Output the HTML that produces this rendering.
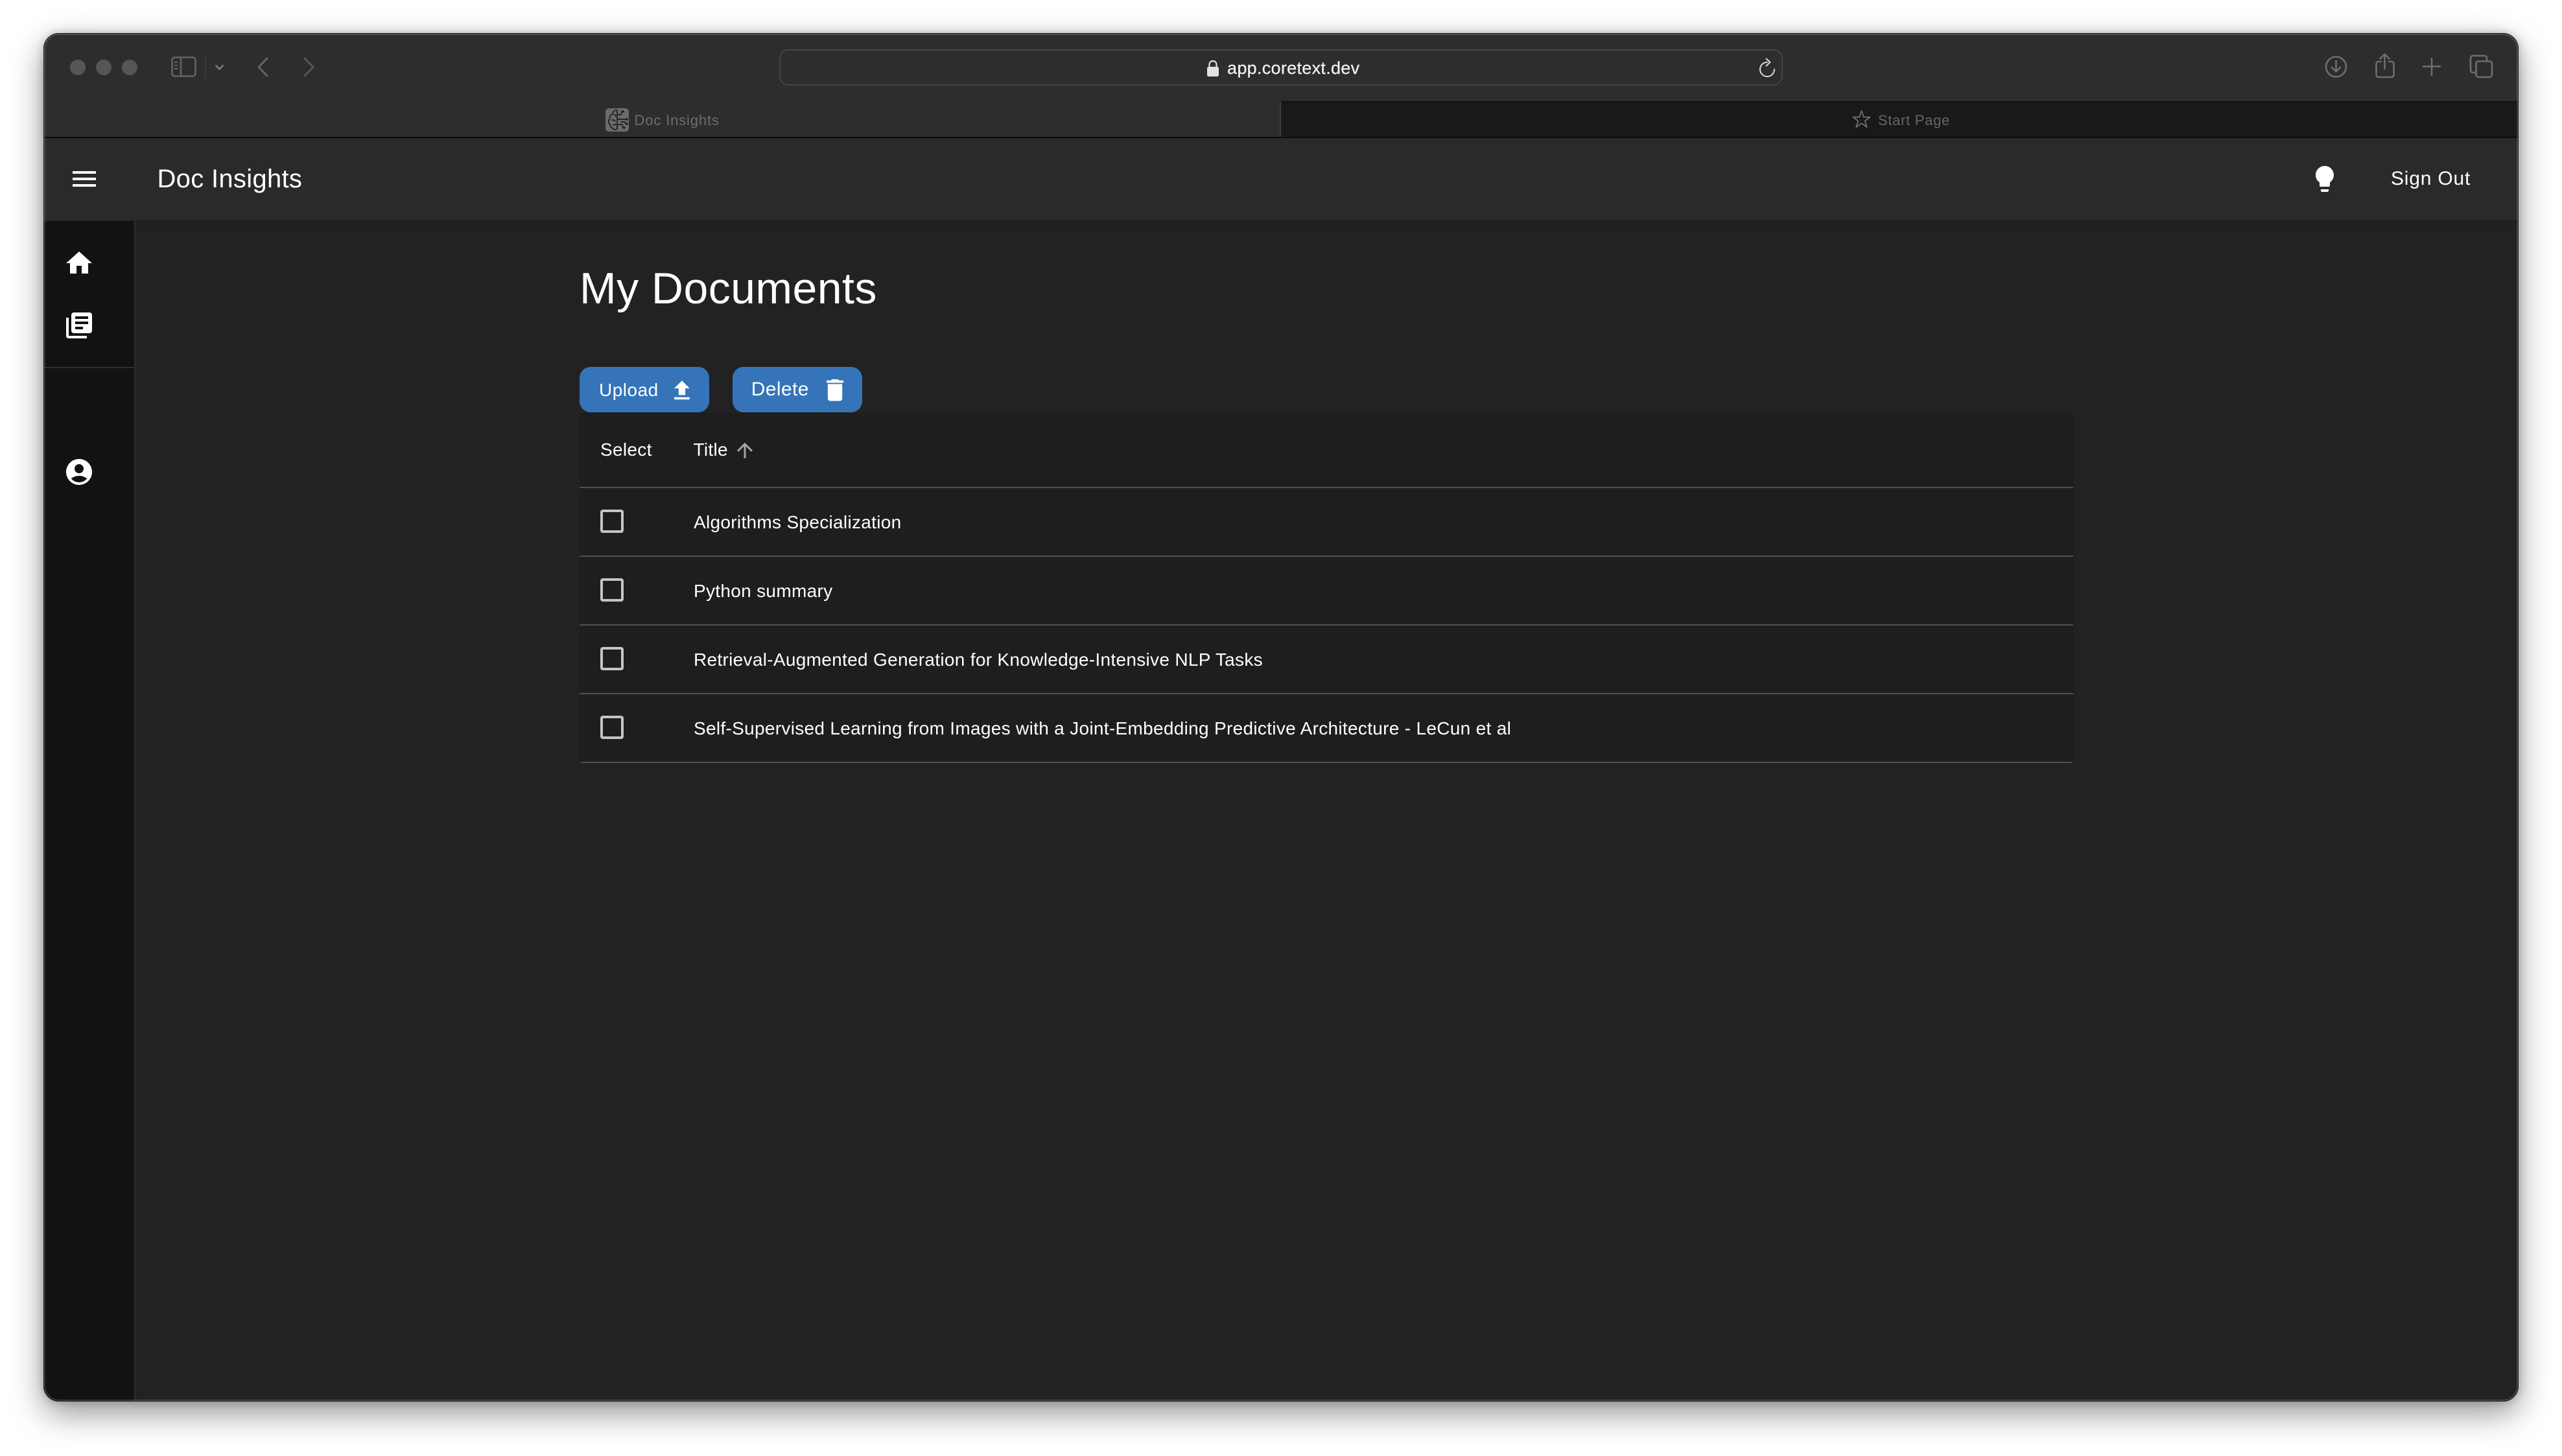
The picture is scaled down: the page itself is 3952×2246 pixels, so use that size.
<!DOCTYPE html>
<html lang="en">
<head>
<meta charset="utf-8">
<title>Doc Insights</title>
<style>
html,body{margin:0;padding:0;width:3952px;height:2246px;background:#fff;overflow:hidden;font-family:"Liberation Sans",Arial,sans-serif}
.abs,.t{position:absolute}
.t{line-height:0;white-space:nowrap;color:#fff}
#win{position:absolute;left:67px;top:51px;width:3818px;height:2111px;border-radius:24px;box-shadow:0 18px 50px rgba(0,0,0,.42),0 0 14px rgba(0,0,0,.22)}
#clip{position:absolute;inset:0;border-radius:24px;overflow:hidden;background:#222}
#edge{position:absolute;left:67px;top:51px;width:3818px;height:2111px;border-radius:24px;box-sizing:border-box;border:1px solid #1c1c1c;box-shadow:inset 0 0 0 2px rgba(255,255,255,.16);pointer-events:none}
.row{font-size:28px;letter-spacing:.31px}
.btn{position:absolute;top:566px;width:200px;height:70px;border-radius:17px;background:#3574b8}
.line{position:absolute;left:894px;width:2304px;height:2px;background:#515151}
svg#ic{position:absolute;left:0;top:0}
</style>
</head>
<body>
<div id="win"><div id="clip"></div></div>

<!-- toolbar -->
<div class="abs" style="left:67px;top:51px;width:3818px;height:161px;background:#2e2d2c;border-radius:24px 24px 0 0"></div>
<div class="abs" style="left:1975px;top:156px;width:1910px;height:56px;background:#191919;border-top:2px solid #0f0f0f;box-sizing:border-box"></div>
<div class="abs" style="left:1974px;top:157px;width:2px;height:55px;background:#3d3d3c"></div>
<div class="abs" style="left:67px;top:211px;width:3818px;height:2px;background:#0c0c0c"></div>
<div class="abs" style="left:1202px;top:76px;width:1548px;height:56px;box-sizing:border-box;border:2px solid #454443;border-radius:14px"></div>

<!-- header -->
<div class="abs" style="left:67px;top:213px;width:3818px;height:127px;background:#2a2a2a"></div>

<!-- sidebar and main -->
<div class="abs" style="left:67px;top:340px;width:3818px;height:1822px;background:#222;border-radius:0 0 24px 24px;overflow:hidden">
  <div class="abs" style="left:142px;top:0;width:3676px;height:12px;background:linear-gradient(#1e1e1e,#222)"></div>
  <div class="abs" style="left:0;top:1px;width:140px;height:1821px;background:#121212"></div>
  <div class="abs" style="left:140px;top:0;width:2px;height:1822px;background:#2e2e2e"></div>
  <div class="abs" style="left:0;top:226px;width:140px;height:2px;background:#2e2e2e"></div>
</div>

<!-- table -->
<div class="abs" style="left:893px;top:637px;width:2306px;height:539px;background:#1e1e1e;border-radius:6px"></div>
<div class="line" style="top:751px"></div>
<div class="line" style="top:857px"></div>
<div class="line" style="top:963px"></div>
<div class="line" style="top:1069px"></div>
<div class="line" style="top:1175px;left:896px;width:2300px"></div>

<div class="btn" style="left:894px"></div>
<div class="btn" style="left:1130px"></div>

<!-- text -->
<div class="t" style="left:1893px;top:104.6px;font-size:27px;letter-spacing:.3px;color:#f2f2f2;-webkit-text-stroke:.25px #f2f2f2">app.coretext.dev</div>
<div class="t" style="left:978.5px;top:185.6px;font-size:22px;letter-spacing:.85px;color:#6e6e6e">Doc Insights</div>
<div class="t" style="left:2897px;top:185.6px;font-size:22px;letter-spacing:.7px;color:#666">Start Page</div>
<div class="t" style="left:242.5px;top:275.9px;font-size:40px;letter-spacing:.3px">Doc Insights</div>
<div class="t" style="left:3688px;top:275.6px;font-size:30px;letter-spacing:.8px">Sign Out</div>
<div class="t" style="left:894px;top:444.9px;font-size:68px;letter-spacing:.45px">My Documents</div>
<div class="t" style="left:924px;top:602px;font-size:28px;letter-spacing:.5px">Upload</div>
<div class="t" style="left:1158.7px;top:600.6px;font-size:30px;letter-spacing:.4px">Delete</div>
<div class="t row" style="left:926px;top:694px">Select</div>
<div class="t row" style="left:1069.5px;top:694px">Title</div>
<div class="t row" style="left:1070px;top:805.8px">Algorithms Specialization</div>
<div class="t row" style="left:1070px;top:911.8px">Python summary</div>
<div class="t row" style="left:1070px;top:1017.8px">Retrieval-Augmented Generation for Knowledge-Intensive NLP Tasks</div>
<div class="t row" style="left:1070px;top:1123.8px">Self-Supervised Learning from Images with a Joint-Embedding Predictive Architecture - LeCun et al</div>

<!-- icons -->
<svg id="ic" width="3952" height="2246" viewBox="0 0 3952 2246" xmlns="http://www.w3.org/2000/svg">
  <!-- traffic lights -->
  <g fill="#565654"><circle cx="120" cy="104" r="12"/><circle cx="160" cy="104" r="12"/><circle cx="200" cy="104" r="12"/></g>
  <!-- sidebar toggle -->
  <g fill="none" stroke="#646463" stroke-width="2.6">
    <rect x="265.5" y="88.5" width="36" height="29" rx="4"/>
    <path d="M279 89v28"/>
    <path d="M269 96h5M269 101h5M269 106h5" stroke-width="2"/>
  </g>
  <path d="M317 86v36" stroke="#3f3f3e" stroke-width="1.5"/>
  <path d="M332.5 100.5l6 6 6-6" fill="none" stroke="#7a7a79" stroke-width="2.6"/>
  <path d="M412 90l-13 13.500 13 13.500" fill="none" stroke="#646463" stroke-width="3" stroke-linecap="round" stroke-linejoin="round"/>
  <path d="M470 90l13 13.500-13 13.500" fill="none" stroke="#565655" stroke-width="3" stroke-linecap="round" stroke-linejoin="round"/>
  <!-- lock -->
  <rect x="1862" y="103" width="18" height="15" rx="2.500" fill="#e2e2e2"/>
  <path d="M1865.500 104v-4.500a5.500 5.500 0 0 1 11 0v4.500" fill="none" stroke="#e2e2e2" stroke-width="2.200"/>
  <!-- reload -->
  <path d="M2726 96A11 11 0 1 0 2737 107" fill="none" stroke="#dcdcdc" stroke-width="2" stroke-linecap="round"/>
  <path d="M2724.500 90.500l6 5.500-6 5.500" fill="none" stroke="#dcdcdc" stroke-width="2" stroke-linecap="round" stroke-linejoin="round"/>
  <!-- right toolbar icons -->
  <g fill="none" stroke="#6e6e6d" stroke-width="2.600" stroke-linecap="round" stroke-linejoin="round">
    <circle cx="3603.500" cy="103" r="15.500"/>
    <path d="M3603.500 94v16M3597 104l6.500 6.500 6.500-6.500"/>
    <path d="M3673 95h-4a3.500 3.500 0 0 0-3.500 3.500v17a3.500 3.500 0 0 0 3.500 3.500h20a3.500 3.500 0 0 0 3.500-3.500v-17a3.500 3.500 0 0 0-3.500-3.500h-4"/>
    <path d="M3678.500 106V84M3671.500 90.500l7-7 7 7"/>
    <path d="M3738 102.500h26M3751 90v26"/>
    <path d="M3818 112h-3.500a3.500 3.500 0 0 1-3.500-3.500v-19a3.500 3.500 0 0 1 3.500-3.500h18a3.500 3.500 0 0 1 3.500 3.500v4"/>
    <rect x="3819.500" y="94.500" width="24.500" height="24.500" rx="4"/>
  </g>
  <!-- tab logo -->
  <rect x="934" y="167" width="36" height="36" rx="5" fill="#6b6b6b"/>
  <g fill="none" stroke="#1f1f1f" stroke-width="1.700" stroke-linecap="round" stroke-linejoin="round">
    <path d="M952 170c-5 0-7 3-7 6-4 1-5 5-4 7-3 2-3 7 0 9 0 4 3 6 5 6 1 3 5 2 6 1z"/>
    <path d="M947 177c2 0 3 1 3 3M944 185c2 0 4 0 5 2M946 193c1-1 3-1 4-1"/>
    <path d="M953 177h5l1-5h2M953 184h13M953 192h7l1 5h2M958 188h6l1 3h2"/>
  </g>
  <g fill="#1f1f1f"><circle cx="961" cy="172" r="1.800"/><circle cx="967" cy="184" r="1.800"/><circle cx="963" cy="197" r="1.800"/><circle cx="967" cy="191" r="1.800"/></g>
  <!-- star -->
  <path d="M2871.500 171l3.300 9.600h9.700l-7.800 6 3 9.400-8.200-5.800-8.200 5.800 3-9.400-7.800-6h9.700z" fill="none" stroke="#6f6f6f" stroke-width="1.800" stroke-linejoin="round"/>

  <!-- app icons -->
  <g fill="#fff">
    <path transform="translate(106,252) scale(2)" d="M3 18h18v-2H3v2zm0-5h18v-2H3v2zm0-7v2h18V6H3z"/>
    <path transform="translate(3562,252) scale(2)" d="M9 21c0 .5.4 1 1 1h4c.6 0 1-.5 1-1v-1H9zm3-19C8.100 2 5 5.100 5 9c0 2.400 1.200 4.500 3 5.700V17c0 .5.4 1 1 1h6c.6 0 1-.5 1-1v-2.300c1.800-1.300 3-3.400 3-5.700 0-3.900-3.100-7-7-7"/>
    <path transform="translate(98,382) scale(2)" d="M10 20v-6h4v6h5v-8h3L12 3 2 12h3v8z"/>
    <path transform="translate(98,478) scale(2)" d="M4 6H2v14c0 1.100.9 2 2 2h14v-2H4V6zm16-4H8c-1.100 0-2 .9-2 2v12c0 1.100.9 2 2 2h12c1.100 0 2-.9 2-2V4c0-1.100-.9-2-2-2zm-1 9H9V9h10v2zm-4 4H9v-2h6v2zm4-8H9V5h10v2z"/>
    <path transform="translate(98,704) scale(2)" d="M12 2C6.480 2 2 6.480 2 12s4.480 10 10 10 10-4.480 10-10S17.520 2 12 2zm0 4c1.930 0 3.500 1.570 3.500 3.500S13.930 13 12 13s-3.500-1.570-3.500-3.500S10.070 6 12 6zm0 14c-2.030 0-4.430-.82-6.140-2.880C7.550 15.800 9.680 15 12 15s4.450.8 6.140 2.120C16.430 19.180 14.030 20 12 20z"/>
    <path transform="translate(1031.400,582) scale(1.710)" d="M9 16h6v-6h4l-7-7-7 7h4zm-4 2h14v2H5z"/>
    <path transform="translate(1265.700,579.400) scale(1.860)" d="M6 19c0 1.100.9 2 2 2h8c1.100 0 2-.9 2-2V7H6zM19 4h-3.500l-1-1h-5l-1 1H5v2h14z"/>
  </g>
  <path transform="translate(1131,676.700) scale(1.500)" fill="#a6a6a6" d="M4 12l1.410 1.410L11 7.830V20h2V7.830l5.580 5.590L20 12l-8-8-8 8z"/>
  <g fill="#c4c4c4">
    <path transform="translate(920,780) scale(2)" d="M19 5v14H5V5h14m0-2H5c-1.100 0-2 .9-2 2v14c0 1.100.9 2 2 2h14c1.100 0 2-.9 2-2V5c0-1.100-.9-2-2-2z"/>
    <path transform="translate(920,886) scale(2)" d="M19 5v14H5V5h14m0-2H5c-1.100 0-2 .9-2 2v14c0 1.100.9 2 2 2h14c1.100 0 2-.9 2-2V5c0-1.100-.9-2-2-2z"/>
    <path transform="translate(920,992) scale(2)" d="M19 5v14H5V5h14m0-2H5c-1.100 0-2 .9-2 2v14c0 1.100.9 2 2 2h14c1.100 0 2-.9 2-2V5c0-1.100-.9-2-2-2z"/>
    <path transform="translate(920,1098) scale(2)" d="M19 5v14H5V5h14m0-2H5c-1.100 0-2 .9-2 2v14c0 1.100.9 2 2 2h14c1.100 0 2-.9 2-2V5c0-1.100-.9-2-2-2z"/>
  </g>
</svg>
<div id="edge"></div>
</body>
</html>
